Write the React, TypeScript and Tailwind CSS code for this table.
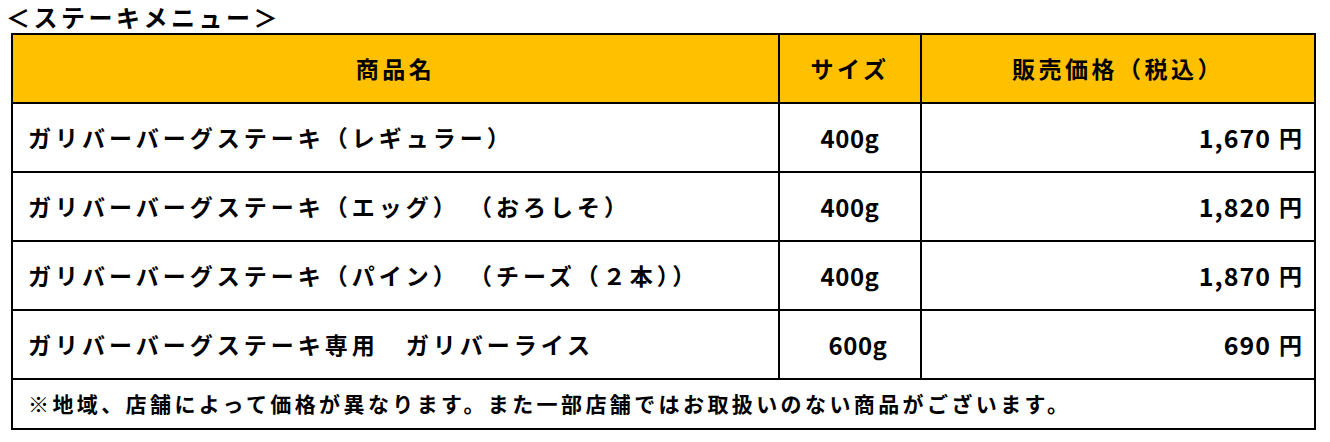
import React from "react";

const jp = { fontFamily: '"Noto Sans CJK JP", "Noto Sans", sans-serif' };

const rows = [
  { name: "ガリバーバーグステーキ（レギュラー）", size: "400g", price: "1,670", shift: false },
  { name: "ガリバーバーグステーキ（エッグ） （おろしそ）", size: "400g", price: "1,820", shift: false },
  { name: "ガリバーバーグステーキ（パイン） （チーズ（２本））", size: "400g", price: "1,870", shift: false },
  { name: "ガリバーバーグステーキ専用　ガリバーライス", size: "600g", price: "690", shift: true },
];

export default function App() {
  return (
    <div className="w-[1330px] h-[442px] bg-white text-black font-bold" style={jp}>
      <div className="h-[33px] pl-[6px] flex items-center text-[24px] tracking-[3.5px] leading-none">
        ＜ステーキメニュー＞
      </div>
      <div className="ml-[11px] w-[1305px] border-2 border-black">
        <div className="grid grid-cols-[767px_142px_1fr] h-[69px] bg-[#FFC000] border-b-2 border-black text-[23px] tracking-[3.5px]">
          <div className="border-r-2 border-black flex items-center justify-center">商品名</div>
          <div className="border-r-2 border-black flex items-center justify-center">サイズ</div>
          <div className="flex items-center justify-center">販売価格（税込）</div>
        </div>
        {rows.map((r) => (
          <div
            key={r.name}
            className="grid grid-cols-[767px_142px_1fr] h-[69px] border-b-2 border-black"
          >
            <div className="border-r-2 border-black flex items-center pl-[15px] text-[23px] tracking-[4px] whitespace-pre">
              {r.name}
            </div>
            <div
              className={
                r.shift
                  ? "border-r-2 border-black flex items-center justify-center pl-[16px] text-[24px] tracking-[0.5px]"
                  : "border-r-2 border-black flex items-center justify-center text-[24px] tracking-[0.5px]"
              }
            >
              {r.size}
            </div>
            <div className="flex items-center justify-end pr-[12px] text-[25px]">
              <span className="tracking-[1px]">{r.price}</span>
              <span className="ml-[8px] text-[23px]">円</span>
            </div>
          </div>
        ))}
        <div className="h-[48px] flex items-center pl-[15px] text-[21px] tracking-[3.4px] whitespace-nowrap">
          ※地域、店舗によって価格が異なります。また一部店舗ではお取扱いのない商品がございます。
        </div>
      </div>
    </div>
  );
}
